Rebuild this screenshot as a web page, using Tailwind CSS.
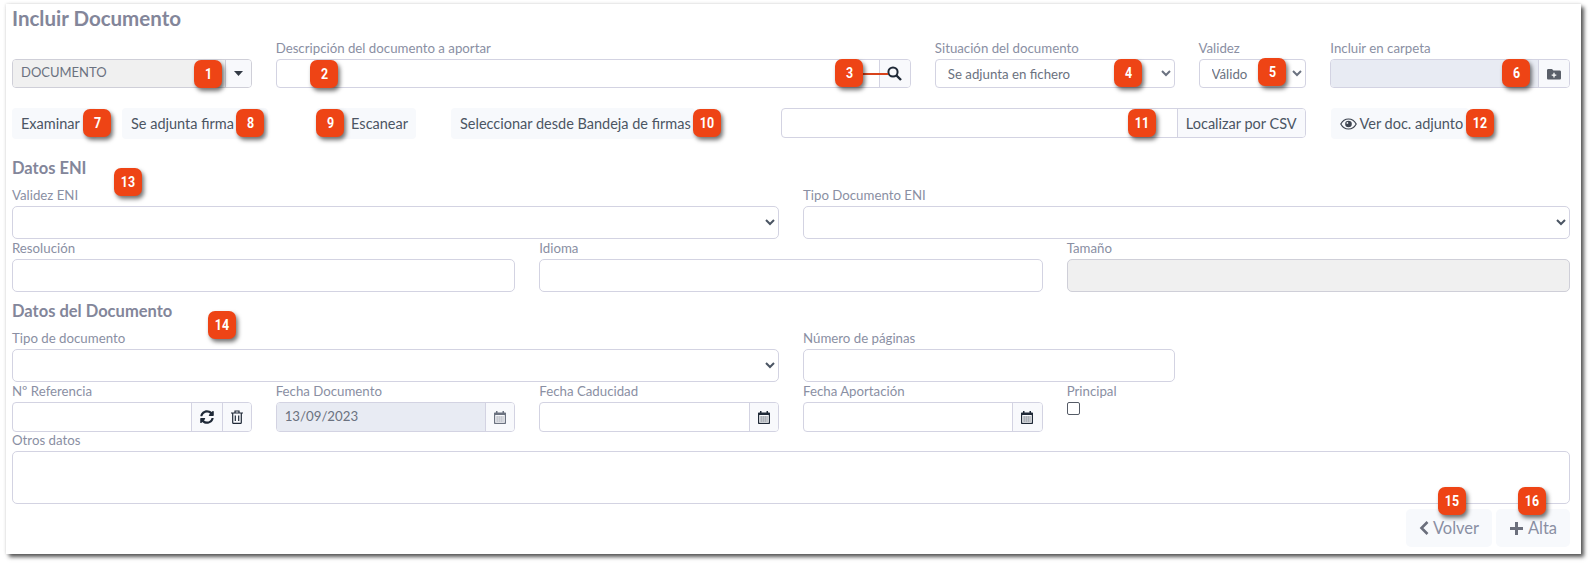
<!DOCTYPE html>
<html lang="es">
<head>
    <meta charset="UTF-8">
    <title>Incluir Documento</title>
    <script src="https://cdn.jsdelivr.net/npm/@tailwindcss/browser@4"></script>
</head>
<body class="bg-white font-['Lato','Noto_Sans',sans-serif] text-[14px] text-[#4b5563]">
<div class="relative w-[1590px] h-[563px] overflow-hidden pt-[4px] pl-[6px]">

    <!-- Card -->
    <div class="w-[1575px] h-[550px] bg-white pl-[6px] pr-[11px] shadow-[3px_3px_4px_rgba(0,0,0,0.65),0_0_3px_rgba(0,0,0,0.15)]">
        <h1 class="h-[29px] leading-[29px] text-[20.5px] font-bold text-[#83869a]">Incluir Documento</h1>

        <!-- Row 1 -->
        <div class="grid grid-cols-12 gap-x-6 mt-[5px]">
            <div class="col-span-2 pt-[21px]">
                <div class="flex h-[29px] border border-[#cfcfd8] rounded-[4px] overflow-hidden">
                    <div class="flex-1 bg-[#f0f0f0] pl-[8px] leading-[25px] text-[13px] text-[#6b7280]">DOCUMENTO</div>
                    <div class="w-[26px] border-l border-[#cfcfd8] bg-[#f8f9fc] flex items-center justify-center">
                        <svg width="9" height="5" viewBox="0 0 9 5"><path d="M0 0h9L4.5 5z" fill="#333a45"/></svg>
                    </div>
                </div>
            </div>
            <div class="col-span-5">
                <label class="block h-[21px] leading-[21px] text-[13.25px] text-[#8a8fa3]">Descripción del documento a aportar</label>
                <div class="flex h-[29px] border border-[#d3d3e2] rounded-[4px] overflow-hidden">
                    <input class="flex-1 min-w-0 outline-none">
                    <div class="w-[31px] border-l border-[#d3d3e2] bg-[#f8f9fc] flex items-center justify-center">
                        <svg width="15" height="15" viewBox="0 0 15 15" fill="none" stroke="#1f2937" stroke-width="2"><circle cx="6" cy="6" r="4.6"/><path d="M9.5 9.5L14 14" stroke-width="2.4"/></svg>
                    </div>
                </div>
            </div>
            <div class="col-span-2">
                <label class="block h-[21px] leading-[21px] text-[13.25px] text-[#8a8fa3]">Situación del documento</label>
                <select class="w-full h-[29px] border border-[#d3d3e2] rounded-[4px] pl-[8px] text-[13.25px] text-[#6b7280] bg-white"><option>Se adjunta en fichero</option></select>
            </div>
            <div class="col-span-1">
                <label class="block h-[21px] leading-[21px] text-[13.25px] text-[#8a8fa3]">Validez</label>
                <select class="w-full h-[29px] border border-[#d3d3e2] rounded-[4px] pl-[8px] text-[13.25px] text-[#6b7280] bg-white"><option>Válido</option></select>
            </div>
            <div class="col-span-2">
                <label class="block h-[21px] leading-[21px] text-[13.25px] text-[#8a8fa3]">Incluir en carpeta</label>
                <div class="flex h-[29px] border border-[#d3d3e2] rounded-[4px] overflow-hidden">
                    <div class="flex-1 bg-[#e8ebf3]"></div>
                    <div class="w-[31px] border-l border-[#d3d3e2] bg-[#f8f9fc] flex items-center justify-center">
                        <svg width="14" height="12" viewBox="0 0 14 12"><path d="M1.3 1H5l1.4 1.5h6.3c.7 0 1.3.6 1.3 1.3v6.4c0 .7-.6 1.3-1.3 1.3H1.3C.6 11.5 0 10.9 0 10.2V2.3C0 1.6.6 1 1.3 1z" fill="#5a5f69"/><path d="M7 4.8v4.6M4.7 7.1h4.6" stroke="#fff" stroke-width="1.3"/></svg>
                    </div>
                </div>
            </div>
        </div>

        <!-- Row 2 -->
        <div class="flex items-start mt-[20px] h-[31px] text-[14.5px]">
            <button class="w-[85px] h-[31px] pl-[9px] text-left bg-[#f7f9fc] rounded-[4px]">Examinar</button>
            <button class="ml-[25px] w-[146px] h-[31px] pl-[9px] text-left bg-[#f7f9fc] rounded-[4px]">Se adjunta firma</button>
            <button class="ml-[48px] w-[100px] h-[31px] pr-[8px] text-right bg-[#f7f9fc] rounded-[4px]">Escanear</button>
            <button class="ml-[35px] w-[244px] h-[31px] pl-[9px] text-left bg-[#f7f9fc] rounded-[4px]">Seleccionar desde Bandeja de firmas</button>
            <div class="ml-[86px] w-[525px] h-[30px] flex border border-[#d3d3e2] rounded-[4px] overflow-hidden">
                <input class="flex-1 min-w-0 outline-none">
                <div class="w-[128.5px] border-l border-[#d3d3e2] bg-[#f8f9fc] leading-[29px] text-center">Localizar por CSV</div>
            </div>
            <button class="ml-[24.5px] w-[138px] h-[31px] pl-[9px] flex items-center gap-[3px] bg-[#f7f9fc] rounded-[4px]">
                <svg width="17" height="12" viewBox="0 0 17 12" fill="none"><path d="M.8 6C2.5 2.8 5.3 1 8.5 1s6 1.8 7.7 5c-1.7 3.2-4.5 5-7.7 5S2.5 9.2.8 6z" stroke="#3d4450" stroke-width="1.2"/><circle cx="8.5" cy="6" r="3.3" fill="#3d4450"/><circle cx="7.4" cy="4.9" r="0.9" fill="#f7f9fc"/></svg>
                Ver doc. adjunto
            </button>
        </div>

        <!-- Datos ENI -->
        <h2 class="mt-[17px] h-[24px] leading-[24px] text-[16.5px] font-bold text-[#83869a]">Datos ENI</h2>
        <div class="grid grid-cols-12 gap-x-6 mt-[5px]">
            <div class="col-span-6">
                <label class="block h-[21px] leading-[21px] text-[13.25px] text-[#8a8fa3]">Validez ENI</label>
                <select class="block w-full h-[33px] border border-[#d3d3e2] rounded-[5px] bg-white"><option></option></select>
            </div>
            <div class="col-span-6">
                <label class="block h-[21px] leading-[21px] text-[13.25px] text-[#8a8fa3]">Tipo Documento ENI</label>
                <select class="block w-full h-[33px] border border-[#d3d3e2] rounded-[5px] bg-white"><option></option></select>
            </div>
        </div>
        <div class="grid grid-cols-12 gap-x-6 -mt-px">
            <div class="col-span-4">
                <label class="block h-[21px] leading-[21px] text-[13.25px] text-[#8a8fa3]">Resolución</label>
                <input class="block w-full h-[33px] border border-[#d3d3e2] rounded-[5px] outline-none">
            </div>
            <div class="col-span-4">
                <label class="block h-[21px] leading-[21px] text-[13.25px] text-[#8a8fa3]">Idioma</label>
                <input class="block w-full h-[33px] border border-[#d3d3e2] rounded-[5px] outline-none">
            </div>
            <div class="col-span-4">
                <label class="block h-[21px] leading-[21px] text-[13.25px] text-[#8a8fa3]">Tamaño</label>
                <div class="h-[33px] border border-[#cfcfd8] rounded-[5px] bg-[#f0f0f0]"></div>
            </div>
        </div>

        <!-- Datos del Documento -->
        <h2 class="mt-[7px] h-[24px] leading-[24px] text-[16.5px] font-bold text-[#83869a]">Datos del Documento</h2>
        <div class="grid grid-cols-12 gap-x-6 mt-[5px]">
            <div class="col-span-6">
                <label class="block h-[21px] leading-[21px] text-[13.25px] text-[#8a8fa3]">Tipo de documento</label>
                <select class="block w-full h-[33px] border border-[#d3d3e2] rounded-[5px] bg-white"><option></option></select>
            </div>
            <div class="col-span-3">
                <label class="block h-[21px] leading-[21px] text-[13.25px] text-[#8a8fa3]">Número de páginas</label>
                <input class="block w-full h-[33px] border border-[#d3d3e2] rounded-[5px] outline-none">
            </div>
        </div>
        <div class="grid grid-cols-12 gap-x-6 -mt-px">
            <div class="col-span-2">
                <label class="block h-[21px] leading-[21px] text-[13.25px] text-[#8a8fa3]">Nº Referencia</label>
                <div class="flex h-[30px] border border-[#d3d3e2] rounded-[4px] overflow-hidden">
                    <input class="flex-1 min-w-0 outline-none">
                    <div class="w-[31px] border-l border-[#d3d3e2] bg-[#f8f9fc] flex items-center justify-center">
                        <svg width="14" height="14" viewBox="0 0 512 512"><path fill="#1f2937" d="M370.72 133.28C339.458 104.008 298.888 87.962 255.848 88c-77.458.068-144.328 53.178-162.791 126.85-1.344 5.363-6.122 9.15-11.651 9.15H24.103c-7.498 0-13.194-6.807-11.807-14.176C33.933 94.924 134.813 8 256 8c66.448 0 126.791 26.136 171.315 68.685L463.03 40.97C478.149 25.851 504 36.559 504 57.941V192c0 13.255-10.745 24-24 24H345.941c-21.382 0-32.09-25.851-16.971-40.971l41.75-41.749zM32 296h134.059c21.382 0 32.09 25.851 16.971 40.971l-41.75 41.75c31.262 29.273 71.835 45.319 114.876 45.28 77.418-.07 144.315-53.144 162.787-126.849 1.344-5.363 6.122-9.15 11.651-9.15h57.304c7.498 0 13.194 6.807 11.807 14.176C478.067 417.076 377.187 504 256 504c-66.448 0-126.791-26.136-171.315-68.685L48.97 471.03C33.851 486.149 8 475.441 8 454.059V320c0-13.255 10.745-24 24-24z"/></svg>
                    </div>
                    <div class="w-[29px] border-l border-[#d3d3e2] bg-[#f8f9fc] flex items-center justify-center">
                        <svg width="12" height="14" viewBox="0 0 12 14" fill="none" stroke="#1f2937" stroke-width="1.2"><path d="M0 3h12M4 3V1h4v2M1.7 3v9.5c0 .5.3.9.8.9h7c.5 0 .8-.4.8-.9V3M4.3 5.5V11M7.7 5.5V11"/></svg>
                    </div>
                </div>
            </div>
            <div class="col-span-2">
                <label class="block h-[21px] leading-[21px] text-[13.25px] text-[#8a8fa3]">Fecha Documento</label>
                <div class="flex h-[30px] border border-[#d3d3e2] rounded-[4px] overflow-hidden">
                    <div class="flex-1 bg-[#e8ebf3] pl-[8px] leading-[26px] text-[13.25px] text-[#6b7280]">13/09/2023</div>
                    <div class="w-[29px] border-l border-[#d3d3e2] bg-[#f8f9fc] flex items-center justify-center">
                        <svg width="12" height="14" viewBox="0 0 12 14"><path d="M2 1h1.5v1.500h5V1H10v1.500h1c.6 0 1 .4 1 1V13c0 .6-.4 1-1 1H1c-.6 0-1-.4-1-1V3.500c0-.6.4-1 1-1h1z" fill="#6b7280"/><rect x="1.2" y="5" width="9.6" height="7.8" fill="#f8f9fc"/><path d="M2.5 7h7M2.5 9h7M2.5 11h7" stroke="#6b7280" stroke-dasharray="1.2 .8"/></svg>
                    </div>
                </div>
            </div>
            <div class="col-span-2">
                <label class="block h-[21px] leading-[21px] text-[13.25px] text-[#8a8fa3]">Fecha Caducidad</label>
                <div class="flex h-[30px] border border-[#d3d3e2] rounded-[4px] overflow-hidden">
                    <input class="flex-1 min-w-0 outline-none">
                    <div class="w-[29px] border-l border-[#d3d3e2] bg-[#f8f9fc] flex items-center justify-center">
                        <svg width="12" height="14" viewBox="0 0 12 14"><path d="M2 1h1.5v1.500h5V1H10v1.500h1c.6 0 1 .4 1 1V13c0 .6-.4 1-1 1H1c-.6 0-1-.4-1-1V3.500c0-.6.4-1 1-1h1z" fill="#1f2937"/><rect x="1.2" y="5" width="9.6" height="7.8" fill="#f8f9fc"/><path d="M2.5 7h7M2.5 9h7M2.5 11h7" stroke="#1f2937" stroke-dasharray="1.2 .8"/></svg>
                    </div>
                </div>
            </div>
            <div class="col-span-2">
                <label class="block h-[21px] leading-[21px] text-[13.25px] text-[#8a8fa3]">Fecha Aportación</label>
                <div class="flex h-[30px] border border-[#d3d3e2] rounded-[4px] overflow-hidden">
                    <input class="flex-1 min-w-0 outline-none">
                    <div class="w-[30px] border-l border-[#d3d3e2] bg-[#f8f9fc] flex items-center justify-center">
                        <svg width="12" height="14" viewBox="0 0 12 14"><path d="M2 1h1.5v1.500h5V1H10v1.500h1c.6 0 1 .4 1 1V13c0 .6-.4 1-1 1H1c-.6 0-1-.4-1-1V3.500c0-.6.4-1 1-1h1z" fill="#1f2937"/><rect x="1.2" y="5" width="9.6" height="7.8" fill="#f8f9fc"/><path d="M2.5 7h7M2.5 9h7M2.5 11h7" stroke="#1f2937" stroke-dasharray="1.2 .8"/></svg>
                    </div>
                </div>
            </div>
            <div class="col-span-2">
                <label class="block h-[21px] leading-[21px] text-[13.25px] text-[#8a8fa3]">Principal</label>
                <div class="w-[13px] h-[13px] border border-[#555b66] rounded-[2px] bg-white"></div>
            </div>
        </div>
        <div class="-mt-[2px]">
            <label class="block h-[21px] leading-[21px] text-[13.25px] text-[#8a8fa3]">Otros datos</label>
            <textarea class="block w-full h-[53px] border border-[#d3d3e2] rounded-[5px] outline-none resize-none"></textarea>
        </div>

        <!-- Footer buttons -->
        <div class="flex justify-end gap-[4px] mt-[5px]">
            <button class="w-[86px] h-[38px] flex items-center justify-center gap-[4px] bg-[#f7f9fc] rounded-[5px] text-[16.5px] text-[#8a8fa3]">
                <svg width="10" height="14" viewBox="0 0 10 14" fill="none" stroke="#6b6f7c" stroke-width="2.6"><path d="M8.5 1L2.5 7l6 6"/></svg>
                Volver
            </button>
            <button class="w-[74px] h-[38px] flex items-center justify-center gap-[4px] bg-[#f7f9fc] rounded-[5px] text-[16.5px] text-[#8a8fa3]">
                <svg width="15" height="15" viewBox="0 0 15 15" fill="none" stroke="#6b6f7c" stroke-width="3"><path d="M7.5 1v13M1 7.5h13"/></svg>
                Alta
            </button>
        </div>
    </div>

    <!-- Callout line from badge 3 to the search icon -->
    <div class="absolute left-[863px] top-[73px] w-[25px] h-[1.5px] bg-[#d8431b]"></div>

    <!-- Callouts -->
    <span class="absolute left-[194px] top-[60px] w-[28px] h-[28px] rounded-[7px] bg-[#ee4415] shadow-[2px_3px_4px_rgba(0,0,0,0.55)] text-white text-[15.5px] font-bold leading-[28px] text-center font-['Roboto',sans-serif]"><span class="inline-block scale-x-[0.8]">1</span></span>
    <span class="absolute left-[310px] top-[60px] w-[28px] h-[28px] rounded-[7px] bg-[#ee4415] shadow-[2px_3px_4px_rgba(0,0,0,0.55)] text-white text-[15.5px] font-bold leading-[28px] text-center font-['Roboto',sans-serif]"><span class="inline-block scale-x-[0.8]">2</span></span>
    <span class="absolute left-[835px] top-[59px] w-[28px] h-[28px] rounded-[7px] bg-[#ee4415] shadow-[2px_3px_4px_rgba(0,0,0,0.55)] text-white text-[15.5px] font-bold leading-[28px] text-center font-['Roboto',sans-serif]"><span class="inline-block scale-x-[0.8]">3</span></span>
    <span class="absolute left-[1114px] top-[59px] w-[28px] h-[28px] rounded-[7px] bg-[#ee4415] shadow-[2px_3px_4px_rgba(0,0,0,0.55)] text-white text-[15.5px] font-bold leading-[28px] text-center font-['Roboto',sans-serif]"><span class="inline-block scale-x-[0.8]">4</span></span>
    <span class="absolute left-[1258px] top-[58px] w-[28px] h-[28px] rounded-[7px] bg-[#ee4415] shadow-[2px_3px_4px_rgba(0,0,0,0.55)] text-white text-[15.5px] font-bold leading-[28px] text-center font-['Roboto',sans-serif]"><span class="inline-block scale-x-[0.8]">5</span></span>
    <span class="absolute left-[1502px] top-[59px] w-[28px] h-[28px] rounded-[7px] bg-[#ee4415] shadow-[2px_3px_4px_rgba(0,0,0,0.55)] text-white text-[15.5px] font-bold leading-[28px] text-center font-['Roboto',sans-serif]"><span class="inline-block scale-x-[0.8]">6</span></span>
    <span class="absolute left-[83px] top-[109px] w-[28px] h-[28px] rounded-[7px] bg-[#ee4415] shadow-[2px_3px_4px_rgba(0,0,0,0.55)] text-white text-[15.5px] font-bold leading-[28px] text-center font-['Roboto',sans-serif]"><span class="inline-block scale-x-[0.8]">7</span></span>
    <span class="absolute left-[236px] top-[109px] w-[28px] h-[28px] rounded-[7px] bg-[#ee4415] shadow-[2px_3px_4px_rgba(0,0,0,0.55)] text-white text-[15.5px] font-bold leading-[28px] text-center font-['Roboto',sans-serif]"><span class="inline-block scale-x-[0.8]">8</span></span>
    <span class="absolute left-[316px] top-[109px] w-[28px] h-[28px] rounded-[7px] bg-[#ee4415] shadow-[2px_3px_4px_rgba(0,0,0,0.55)] text-white text-[15.5px] font-bold leading-[28px] text-center font-['Roboto',sans-serif]"><span class="inline-block scale-x-[0.8]">9</span></span>
    <span class="absolute left-[693px] top-[109px] w-[28px] h-[28px] rounded-[7px] bg-[#ee4415] shadow-[2px_3px_4px_rgba(0,0,0,0.55)] text-white text-[15.5px] font-bold leading-[28px] text-center font-['Roboto',sans-serif]"><span class="inline-block scale-x-[0.8]">10</span></span>
    <span class="absolute left-[1128px] top-[109px] w-[28px] h-[28px] rounded-[7px] bg-[#ee4415] shadow-[2px_3px_4px_rgba(0,0,0,0.55)] text-white text-[15.5px] font-bold leading-[28px] text-center font-['Roboto',sans-serif]"><span class="inline-block scale-x-[0.8]">11</span></span>
    <span class="absolute left-[1466px] top-[109px] w-[28px] h-[28px] rounded-[7px] bg-[#ee4415] shadow-[2px_3px_4px_rgba(0,0,0,0.55)] text-white text-[15.5px] font-bold leading-[28px] text-center font-['Roboto',sans-serif]"><span class="inline-block scale-x-[0.8]">12</span></span>
    <span class="absolute left-[114px] top-[168px] w-[28px] h-[28px] rounded-[7px] bg-[#ee4415] shadow-[2px_3px_4px_rgba(0,0,0,0.55)] text-white text-[15.5px] font-bold leading-[28px] text-center font-['Roboto',sans-serif]"><span class="inline-block scale-x-[0.8]">13</span></span>
    <span class="absolute left-[208px] top-[311px] w-[28px] h-[28px] rounded-[7px] bg-[#ee4415] shadow-[2px_3px_4px_rgba(0,0,0,0.55)] text-white text-[15.5px] font-bold leading-[28px] text-center font-['Roboto',sans-serif]"><span class="inline-block scale-x-[0.8]">14</span></span>
    <span class="absolute left-[1438px] top-[487px] w-[28px] h-[28px] rounded-[7px] bg-[#ee4415] shadow-[2px_3px_4px_rgba(0,0,0,0.55)] text-white text-[15.5px] font-bold leading-[28px] text-center font-['Roboto',sans-serif]"><span class="inline-block scale-x-[0.8]">15</span></span>
    <span class="absolute left-[1518px] top-[487px] w-[28px] h-[28px] rounded-[7px] bg-[#ee4415] shadow-[2px_3px_4px_rgba(0,0,0,0.55)] text-white text-[15.5px] font-bold leading-[28px] text-center font-['Roboto',sans-serif]"><span class="inline-block scale-x-[0.8]">16</span></span>
</div>
</body>
</html>
